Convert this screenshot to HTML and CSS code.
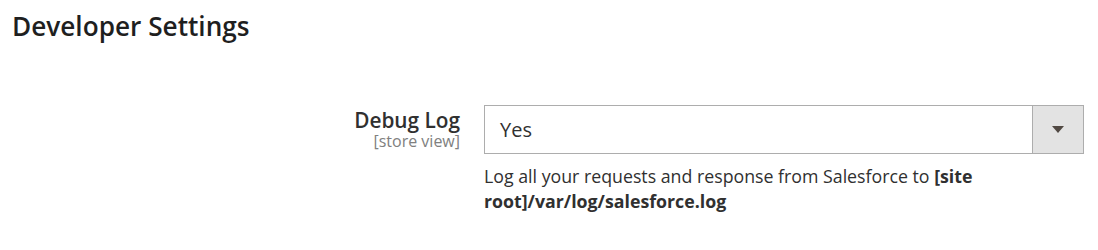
FILE: index.html
```html
<!DOCTYPE html>
<html>
<head>
<meta charset="utf-8">
<link rel="stylesheet" href="styles.css">
</head>
<body>
<div class="page">
  <h2 class="section-title">Developer Settings</h2>
  <div class="field">
    <div class="label">
      <span class="label-text">Debug Log</span>
      <span class="scope">[store view]</span>
    </div>
    <div class="control">
      <div class="select">
        <span class="select-value">Yes</span>
        <span class="select-btn"><span class="arrow"></span></span>
      </div>
      <p class="note">Log all your requests and response from Salesforce to <strong>[site root]/var/log/salesforce.log</strong></p>
    </div>
  </div>
</div>
</body>
</html>
```
FILE: styles.css
```css
html, body {
  margin: 0;
  padding: 0;
  background: #ffffff;
}
.page {
  font-family: "Open Sans", "Noto Sans", sans-serif;
  color: #303030;
  padding: 11px 12px 0 12px;
}
.section-title {
  margin: 0;
  font-size: 26.2px;
  font-weight: 600;
  line-height: 31px;
  color: #1f1f1f;
}
.field {
  display: flex;
  margin-top: 63px;
  gap: 24px;
}
.label {
  width: 448px;
  display: flex;
  flex-direction: column;
  align-items: flex-end;
  padding-top: 4px;
}
.label-text {
  font-size: 20.8px;
  font-weight: 600;
  line-height: 23px;
  color: #303030;
}
.scope {
  font-size: 16px;
  line-height: 18px;
  color: #808080;
}
.control {
  width: 600px;
}
.select {
  display: flex;
  height: 49px;
  box-sizing: border-box;
  border: 1px solid #adadad;
  background: #ffffff;
}
.select-value {
  flex: 1;
  font-size: 20px;
  line-height: 47px;
  padding-left: 15px;
  color: #303030;
}
.select-btn {
  width: 50px;
  background: #e3e3e3;
  border-left: 1px solid #adadad;
  display: flex;
  align-items: center;
  justify-content: center;
}
.arrow {
  width: 0;
  height: 0;
  border-left: 6px solid transparent;
  border-right: 6px solid transparent;
  border-top: 7px solid #514943;
}
.note {
  margin: 10px 0 0 0;
  font-size: 17.75px;
  line-height: 25px;
  color: #303030;
  max-width: 520px;
}
.note strong {
  font-weight: 700;
}
```
